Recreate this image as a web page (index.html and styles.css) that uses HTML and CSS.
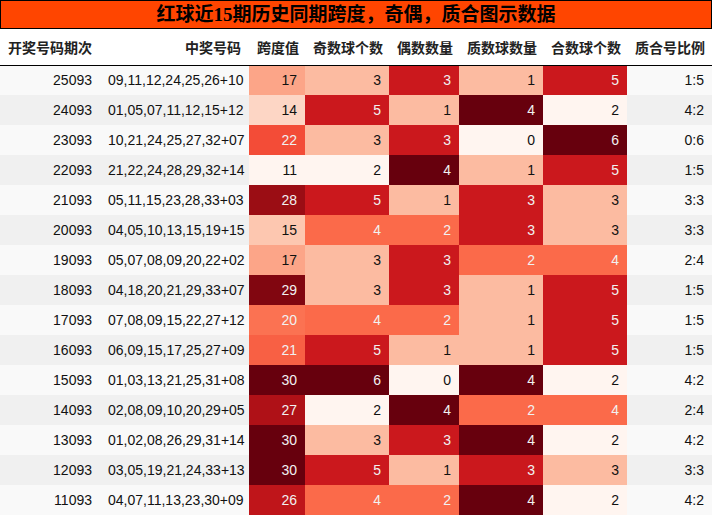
FILE: index.html
```html
<!DOCTYPE html>
<html lang="zh">
<head>
<meta charset="utf-8">
<title>红球近15期历史同期跨度</title>
<link rel="stylesheet" href="styles.css">
</head>
<body>
<div class="title">红球近15期历史同期跨度，奇偶，质合图示数据</div>
<table class="grid">
<colgroup>
<col class="w1"><col class="w2"><col class="w3"><col class="w4"><col class="w5"><col class="w6"><col class="w7"><col class="w8">
</colgroup>
<thead>
<tr><th>开奖号码期次</th><th>中奖号码</th><th>跨度值</th><th>奇数球个数</th><th>偶数数量</th><th>质数球数量</th><th>合数球个数</th><th>质合号比例</th></tr>
</thead>
<tbody>
<tr><td>25093</td><td>09,11,12,24,25,26+10</td><td style="background:#fca588">17</td><td class="q1">3</td><td class="q3">3</td><td class="q1">1</td><td class="q3">5</td><td>1:5</td></tr>
<tr><td>24093</td><td>01,05,07,11,12,15+12</td><td style="background:#fdd6c5">14</td><td class="q3">5</td><td class="q1">1</td><td class="q4">4</td><td class="q0">2</td><td>4:2</td></tr>
<tr><td>23093</td><td>10,21,24,25,27,32+07</td><td class="lt" style="background:#f34c37">22</td><td class="q1">3</td><td class="q3">3</td><td class="q0">0</td><td class="q4">6</td><td>0:6</td></tr>
<tr><td>22093</td><td>21,22,24,28,29,32+14</td><td style="background:#fff5f0">11</td><td class="q0">2</td><td class="q4">4</td><td class="q1">1</td><td class="q3">5</td><td>1:5</td></tr>
<tr><td>21093</td><td>05,11,15,23,28,33+03</td><td class="lt" style="background:#9b0d14">28</td><td class="q3">5</td><td class="q1">1</td><td class="q3">3</td><td class="q1">3</td><td>3:3</td></tr>
<tr><td>20093</td><td>04,05,10,13,15,19+15</td><td style="background:#fdc7b0">15</td><td class="q2">4</td><td class="q2">2</td><td class="q3">3</td><td class="q1">3</td><td>3:3</td></tr>
<tr><td>19093</td><td>05,07,08,09,20,22+02</td><td style="background:#fca588">17</td><td class="q1">3</td><td class="q3">3</td><td class="q2">2</td><td class="q2">4</td><td>2:4</td></tr>
<tr><td>18093</td><td>04,18,20,21,29,33+07</td><td class="lt" style="background:#810610">29</td><td class="q1">3</td><td class="q3">3</td><td class="q1">1</td><td class="q3">5</td><td>1:5</td></tr>
<tr><td>17093</td><td>07,08,09,15,22,27+12</td><td class="lt" style="background:#fb7252">20</td><td class="q2">4</td><td class="q2">2</td><td class="q1">1</td><td class="q3">5</td><td>1:5</td></tr>
<tr><td>16093</td><td>06,09,15,17,25,27+09</td><td class="lt" style="background:#f86044">21</td><td class="q3">5</td><td class="q1">1</td><td class="q1">1</td><td class="q3">5</td><td>1:5</td></tr>
<tr><td>15093</td><td>01,03,13,21,25,31+08</td><td class="lt" style="background:#67000d">30</td><td class="q4">6</td><td class="q0">0</td><td class="q4">4</td><td class="q0">2</td><td>4:2</td></tr>
<tr><td>14093</td><td>02,08,09,10,20,29+05</td><td class="lt" style="background:#af1117">27</td><td class="q0">2</td><td class="q4">4</td><td class="q2">2</td><td class="q2">4</td><td>2:4</td></tr>
<tr><td>13093</td><td>01,02,08,26,29,31+14</td><td class="lt" style="background:#67000d">30</td><td class="q1">3</td><td class="q3">3</td><td class="q4">4</td><td class="q0">2</td><td>4:2</td></tr>
<tr><td>12093</td><td>03,05,19,21,24,33+13</td><td class="lt" style="background:#67000d">30</td><td class="q3">5</td><td class="q1">1</td><td class="q3">3</td><td class="q1">3</td><td>3:3</td></tr>
<tr><td>11093</td><td>04,07,11,13,23,30+09</td><td class="lt" style="background:#bf151a">26</td><td class="q2">4</td><td class="q2">2</td><td class="q4">4</td><td class="q0">2</td><td>4:2</td></tr>
</tbody>
</table>
</body>
</html>
```
FILE: styles.css
```css
* { box-sizing: border-box; }
html, body { margin: 0; padding: 0; background: #ffffff; }
body { width: 712px; font-family: "Liberation Sans", "Noto Sans CJK SC", sans-serif; color: #000; }

.title {
  height: 29px;
  line-height: 27px;
  border: 1px solid #000;
  background: #ff4500;
  color: #000;
  text-align: center;
  font-family: "Liberation Serif", "Noto Sans CJK SC", serif;
  font-weight: bold;
  font-size: 19px;
}

.grid {
  width: 712px;
  border-collapse: collapse;
  table-layout: fixed;
  font-size: 14px;
}
.w1 { width: 100px; }
.w2 { width: 149px; }
.w3 { width: 56px; }
.w4 { width: 84px; }
.w5 { width: 70px; }
.w6 { width: 84px; }
.w7 { width: 84px; }
.w8 { width: 85px; }

.grid th {
  height: 36px;
  padding: 0 8px;
  text-align: right;
  font-family: "Noto Sans CJK SC", sans-serif;
  font-weight: bold;
  font-size: 14px;
  color: #222;
  background: #fff;
  border-bottom: 1px solid #000;
  white-space: nowrap;
}
.grid th:first-child { text-align: left; }

.grid td {
  height: 30px;
  padding: 0 8px;
  text-align: right;
  white-space: nowrap;
  color: #111;
}
.grid tbody tr:nth-child(odd) { background: #f9f9f9; }
.grid tbody tr:nth-child(even) { background: #f0f0f0; }

.grid td.q0 { background: #fff5f0; }
.grid td.q1 { background: #fcbba1; }
.grid td.q2 { background: #fb6a4a; color: #f1f1f1; }
.grid td.q3 { background: #cb181d; color: #f1f1f1; }
.grid td.q4 { background: #67000d; color: #f1f1f1; }
.grid td.lt { color: #f1f1f1; }
```
